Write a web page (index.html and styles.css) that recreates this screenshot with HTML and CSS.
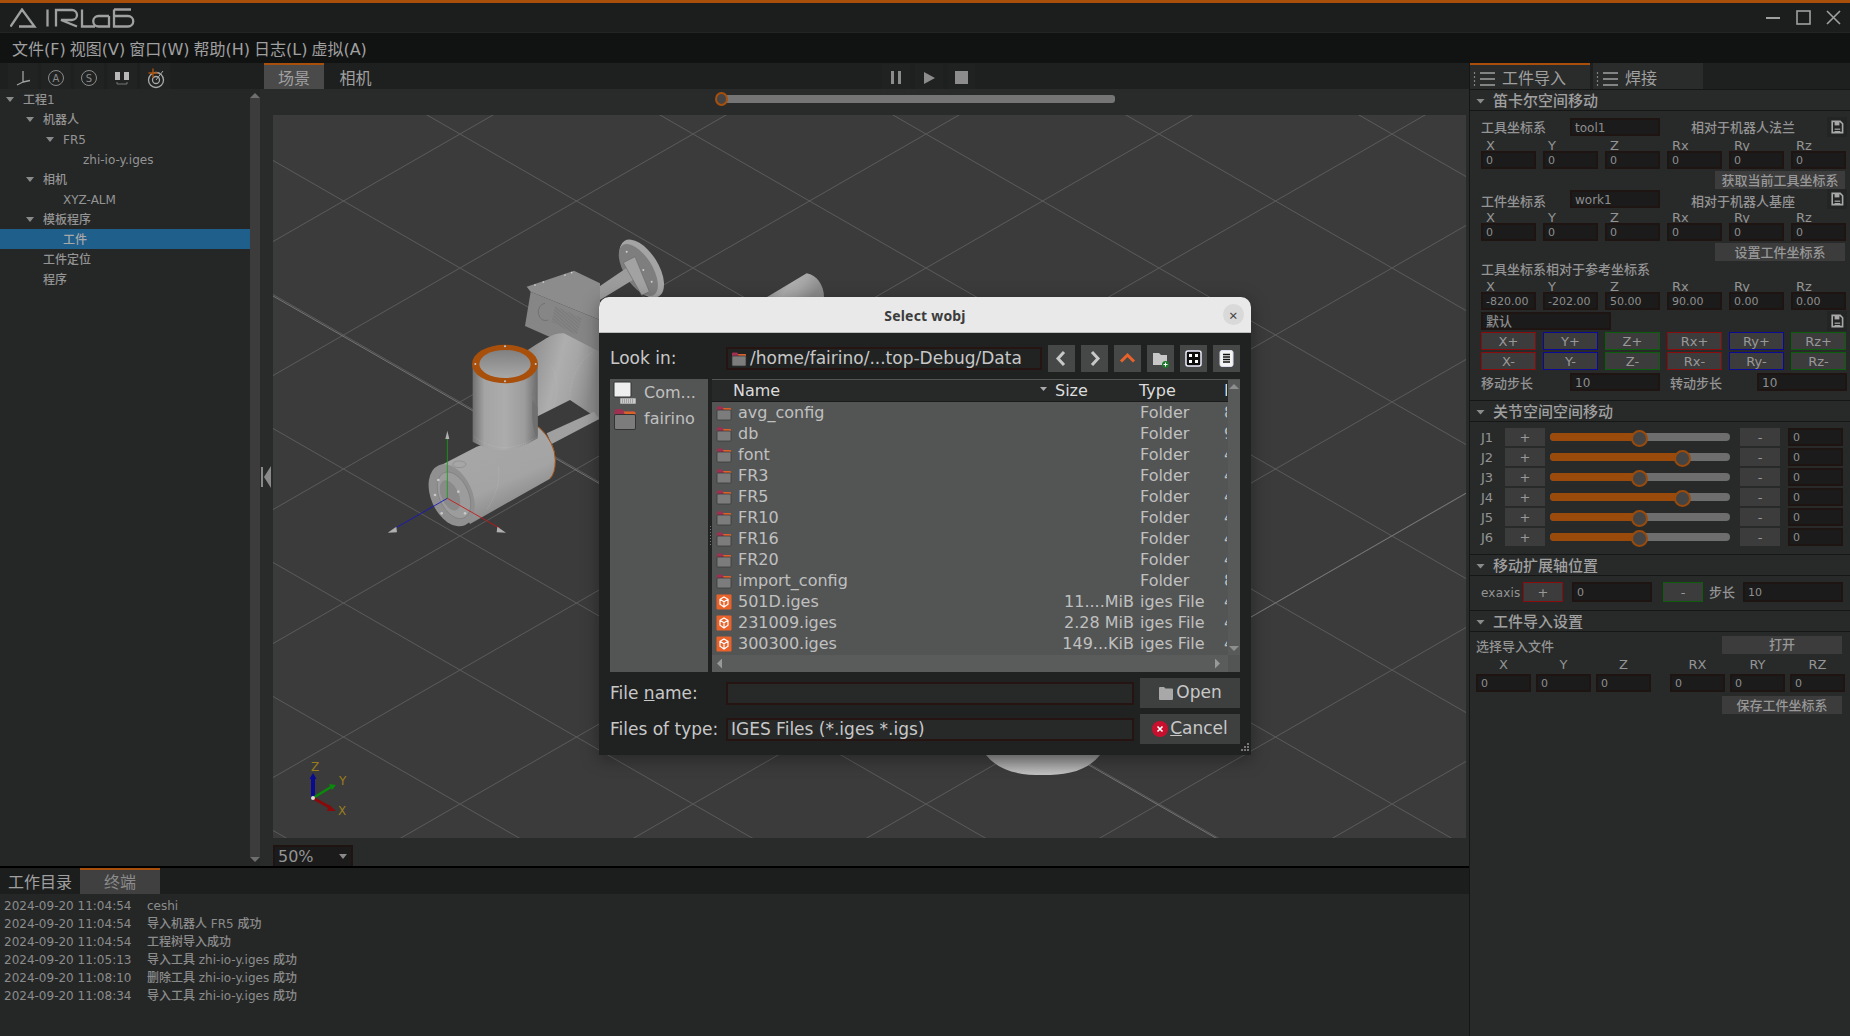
FILE: index.html
```html
<!DOCTYPE html>
<html lang="zh">
<head>
<meta charset="utf-8">
<title>AIRLab</title>
<link rel="stylesheet" href="styles.css">
</head>
<body>
<svg class="defs" width="0" height="0" aria-hidden="true">
  <defs>
    <symbol id="folder" viewBox="0 0 16 16">
      <path d="M1 2.500a1 1 0 0 1 1-1h4l1.500 1.500H14a1 1 0 0 1 1 1V7H1z" fill="#a03050"/>
      <path d="M7 3h7a1 1 0 0 1 1 1v1H8z" fill="#d9622b"/>
      <rect x="1" y="5" width="14" height="10" rx="1" fill="#7c7c7c" stroke="#333" stroke-width=".7"/>
    </symbol>
    <symbol id="iges" viewBox="0 0 16 16">
      <rect x="0.500" y="0.500" width="15" height="15" rx="1" fill="#e9622a"/>
      <path d="M8 3l4 2.300v4.900L8 13l-4-2.800V5.300zM4 5.300l4 2.400 4-2.400M8 7.700V13" fill="none" stroke="#fff" stroke-width="1.200"/>
    </symbol>
    <symbol id="save" viewBox="0 0 20 20">
      <path d="M4 3h10l3 3v11H4z" fill="none" stroke="#a8a8a8" stroke-width="2"/>
      <rect x="7" y="3" width="6" height="5" fill="#a8a8a8"/>
      <rect x="7" y="12" width="7" height="1.500" fill="#a8a8a8"/>
      <rect x="7" y="15" width="7" height="1.500" fill="#a8a8a8"/>
    </symbol>
    <symbol id="burger" viewBox="0 0 24 16">
      <path d="M7 2h15M7 8h15M7 14h15" stroke="#a0a0a0" stroke-width="1.500"/>
      <path d="M1.500 1v2M1.500 5v2M1.500 9v2M1.500 13v2" stroke="#808080" stroke-width="1.200"/>
    </symbol>
    <pattern id="gridcell" x="460" y="134" width="233" height="134" patternUnits="userSpaceOnUse">
      <path d="M0 0L233 134M0 134L233 0" stroke="#5a5a5a" stroke-width="1" fill="none"/>
    </pattern>
    <linearGradient id="gv" x1="0" x2="1" y1="0" y2="0">
      <stop offset="0" stop-color="#707070"/><stop offset=".18" stop-color="#a4a4a4"/><stop offset=".5" stop-color="#acacac"/><stop offset=".8" stop-color="#9c9c9c"/><stop offset="1" stop-color="#6c6c6c"/>
    </linearGradient>
    <linearGradient id="gh" x1=".2" x2=".75" y1="0" y2="1">
      <stop offset="0" stop-color="#a8a8a8"/><stop offset=".6" stop-color="#a4a4a4"/><stop offset="1" stop-color="#787878"/>
    </linearGradient>
    <linearGradient id="ge" x1="0" x2="1" y1="0" y2=".3">
      <stop offset="0" stop-color="#888"/><stop offset=".5" stop-color="#aeaeae"/><stop offset=".7" stop-color="#a6a6a6"/><stop offset="1" stop-color="#8c8c8c"/>
    </linearGradient>
    <linearGradient id="gb" x1="0" x2="0" y1="0" y2="1">
      <stop offset="0" stop-color="#8a8a8a"/><stop offset="1" stop-color="#c2c2c2"/>
    </linearGradient>
    <linearGradient id="gi" x1="0" x2="0" y1="0" y2="1">
      <stop offset="0" stop-color="#808080"/><stop offset="1" stop-color="#a8a8a8"/>
    </linearGradient>
    <pattern id="hatch" width="4" height="4" patternUnits="userSpaceOnUse" patternTransform="rotate(70)">
      <path d="M0 0V4" stroke="#686868" stroke-width="1.500"/>
    </pattern>
  </defs>
</svg>

<div class="app">
  <div class="accent"></div>

  <header class="titlebar">
    <svg class="logo" width="126" height="20" viewBox="0 0 126 20" role="img" aria-label="AIRLab">
      <path d="M.5 18.500L12 1.500 24.500 18.500H9M37.500 1.500V18.500M46 18.500V2H62a5 5 0 0 1 0 10H51L67 18.500M72 1.500V18.500H85M99 8H88.500a5.200 5.200 0 0 0 0 10.500H99V8M104 1.500V18.500H118a5.200 5.200 0 0 0 0-10.500H104M104 1.500H121" fill="none" stroke="#a0a0a0" stroke-width="2.300"/>
    </svg>
    <div class="winctl">
      <svg width="84" height="16" viewBox="0 0 84 16" aria-hidden="true">
        <path d="M0 8H14" stroke="#a0a0a0" stroke-width="2"/>
        <rect x="31" y="1" width="13" height="13" fill="none" stroke="#a0a0a0" stroke-width="1.600"/>
        <path d="M61 1L74 14M74 1L61 14" stroke="#a0a0a0" stroke-width="1.600"/>
      </svg>
    </div>
  </header>

  <nav class="menubar">
    <span>文件(F)</span><span>视图(V)</span><span>窗口(W)</span><span>帮助(H)</span><span>日志(L)</span><span>虚拟(A)</span>
  </nav>

  <div class="workspace">
    <div class="main">
      <div class="toolrow">
        <div class="tools">
          <svg class="tool" width="30" height="26" viewBox="0 -2 30 26"><path d="M15 6V17M15 17L9 20M15 17L22 15.500" stroke="#a0a0a0" stroke-width="1.300" fill="none"/></svg>
          <svg class="tool" width="30" height="26" viewBox="0 -2 30 26"><circle cx="15" cy="13" r="7.500" fill="none" stroke="#8a8a8a"/><text x="15" y="17" class="toolglyph">A</text></svg>
          <svg class="tool" width="30" height="26" viewBox="0 -2 30 26"><circle cx="15" cy="13" r="7.500" fill="none" stroke="#8a8a8a"/><text x="15" y="17" class="toolglyph">S</text></svg>
          <svg class="tool" width="30" height="26" viewBox="0 -2 30 26"><rect x="8" y="7" width="5" height="8" fill="#b8b8b8"/><rect x="17" y="7" width="5" height="8" fill="#b8b8b8"/><path d="M10 17v2h10v-2" stroke="#777" fill="none"/></svg>
          <svg class="tool" width="30" height="26" viewBox="0 -2 30 26"><circle cx="16" cy="15" r="7.500" fill="none" stroke="#a8a8a8" stroke-width="1.300"/><circle cx="16" cy="15" r="3.500" fill="none" stroke="#a8a8a8" stroke-width="1.300"/><path d="M16 15L23 6" stroke="#a8a8a8"/><path d="M13 3.500V12.500M8.500 8H17.500" stroke="#a84f0c" stroke-width="1.400"/></svg>
        </div>
        <div class="viewtabs">
          <span class="vtab on">场景</span><span class="vtab">相机</span>
        </div>
        <div class="playback">
          <svg width="94" height="26" viewBox="0 0 94 26" aria-hidden="true">
            <rect x="1" y="1" width="28" height="25" fill="#202222"/><rect x="34" y="1" width="28" height="25" fill="#202222"/><rect x="67" y="1" width="27" height="25" fill="#202222"/>
            <rect x="10" y="8" width="3" height="13" fill="#8c8c8c"/><rect x="17" y="8" width="3" height="13" fill="#8c8c8c"/>
            <path d="M43 9L54 15 43 21z" fill="#8c8c8c"/>
            <rect x="74" y="8" width="13" height="13" fill="#8c8c8c"/>
          </svg>
        </div>
      </div>

      <div class="center">
        <aside class="tree">
          <div class="row l0"><i class="tri"></i>工程1</div>
          <div class="row l1"><i class="tri"></i>机器人</div>
          <div class="row l2"><i class="tri"></i>FR5</div>
          <div class="row l3"><i class="notri"></i>zhi-io-y.iges</div>
          <div class="row l1"><i class="tri"></i>相机</div>
          <div class="row l2"><i class="notri"></i>XYZ-ALM</div>
          <div class="row l1"><i class="tri"></i>模板程序</div>
          <div class="row l2 sel"><i class="notri"></i>工件</div>
          <div class="row l1"><i class="notri"></i>工件定位</div>
          <div class="row l1"><i class="notri"></i>程序</div>
        </aside>
        <div class="vscroll"><i class="up"></i><b></b><i class="down"></i></div>
        <div class="stage">
          <div class="timeline"><div class="track"><span class="thumb"></span></div></div>
          <div class="viewrow">
            <div class="collapse"><svg width="13" height="22" viewBox="0 0 13 22" aria-hidden="true"><rect x="1" y="1" width="2" height="20" fill="#8a8a8a"/><path d="M11 0V22L4 11z" fill="#8a8a8a"/></svg></div>
            <svg class="scene" width="1193" height="723" viewBox="273 115 1193 723" aria-hidden="true">
              <rect x="273" y="115" width="1193" height="723" fill="#3b3b3b"/>
              <rect x="273" y="115" width="1193" height="723" fill="url(#gridcell)"/>
              <path d="M273 296L1468 983M1251 617L1468 492" stroke="#747474" fill="none"/>
              <path d="M986 755C1000 772 1020 775 1043 775 1066 775 1086 772 1100 755z" fill="url(#gb)"/>
              <g transform="translate(370 220) scale(.33333)">
                <path d="M1190 232L1310 160C1340 165 1362 195 1362 232z" fill="url(#ge)"/>
                <ellipse cx="815" cy="146" rx="50" ry="98" transform="rotate(-32 815 146)" fill="#a4a4a4"/>
                <ellipse cx="805" cy="150" rx="42" ry="88" transform="rotate(-32 805 150)" fill="#7e7e7e"/>
                <path d="M660 228L680 205 775 140 792 178 690 240z" fill="#9c9c9c"/>
                <path d="M760 128L795 110 838 215 815 226z" fill="#a2a2a2" stroke="#6c6c6c" stroke-width="2"/>
                <g fill="#cfcfcf"><circle cx="770" cy="95" r="3"/><circle cx="820" cy="150" r="3"/><circle cx="845" cy="185" r="3"/></g>
                <path d="M470 200L612 152 690 190V300L482 215z" fill="#8c8c8c"/>
                <path d="M482 215L690 300V400L640 395 465 318z" fill="#868686"/>
                <g fill="#d8d8d8"><circle cx="495" cy="195" r="2.500"/><circle cx="520" cy="186" r="2.500"/><circle cx="585" cy="165" r="2.500"/><circle cx="605" cy="158" r="2.500"/></g>
                <path d="M555 258L635 295 620 345 545 305z" fill="url(#hatch)"/>
                <path d="M525 250A22 26 0 1 0 535 300" fill="none" stroke="#666" stroke-width="2"/>
                <path d="M470 392C520 362 545 338 582 340L690 396V600L600 540 500 590z" fill="url(#ge)"/>
                <path d="M545 440Q575 490 550 560M600 540Q600 440 670 395" stroke="#d0d0d0" stroke-dasharray="2 4" fill="none"/>
                <path d="M530 640L672 575 688 597 545 672z" fill="#a0a0a0"/>
                <path d="M195 745L320 680 500 618Q556 660 556 722 556 760 540 776L300 912z" fill="url(#gh)"/>
                <path d="M506 620Q556 668 556 722 556 760 540 776" fill="none" stroke="#a84f0c" stroke-width="3"/>
                <path d="M308 432V665Q400 720 503 655V432z" fill="url(#gv)"/>
                <path d="M492 500C480 540 498 560 503 560V650C490 640 480 590 492 500z" fill="#707070"/>
                <path d="M312 650Q400 715 503 650M385 740Q395 800 350 870" stroke="#dcdcdc" stroke-dasharray="2 4" fill="none"/>
                <ellipse cx="405" cy="432" rx="99" ry="58" fill="#a84f0c"/>
                <ellipse cx="405" cy="432" rx="77" ry="42" fill="url(#gi)"/>
                <g fill="#cccccc"><circle cx="405" cy="379" r="3"/><circle cx="405" cy="484" r="3"/><circle cx="316" cy="432" r="3"/><circle cx="497" cy="432" r="3"/></g>
                <ellipse cx="268" cy="733" rx="20" ry="10" fill="none" stroke="#888" stroke-width="2"/>
                <ellipse cx="245" cy="826" rx="62" ry="98" transform="rotate(-24 245 826)" fill="#909090"/>
                <ellipse cx="252" cy="826" rx="44" ry="74" transform="rotate(-24 252 826)" fill="#9c9c9c" stroke="#7c7c7c" stroke-width="2"/>
                <ellipse cx="240" cy="826" rx="26" ry="48" transform="rotate(-24 240 826)" fill="#8a8a8a"/>
                <g fill="#c8c8c8"><circle cx="205" cy="780" r="4"/><circle cx="265" cy="815" r="4"/><circle cx="215" cy="880" r="4"/><circle cx="285" cy="880" r="4"/><circle cx="195" cy="825" r="4"/></g>
                <path d="M232 835V650" stroke="#12a012" stroke-width="2.500"/>
                <path d="M232 835L75 925" stroke="#1414c8" stroke-width="2.500"/>
                <path d="M232 835L390 925" stroke="#c81414" stroke-width="2.500"/>
                <g fill="#b0b0b0"><path d="M232 632l6 25h-12z"/><path d="M53 938l26-18 2 17z"/><path d="M408 938l-26-18-2 17z"/></g>
              </g>
              <path d="M313 798V776" stroke="#0a0a90" stroke-width="4"/>
              <path d="M313 773l-3.500 6h7z" fill="#0a0a90"/>
              <path d="M313 798L331 787" stroke="#0a8a0a" stroke-width="2.500"/>
              <path d="M336 785l-7-1 3 6z" fill="#0a8a0a"/>
              <path d="M313 798L331 808" stroke="#8a0a0a" stroke-width="3"/>
              <path d="M336 811l-7-6-2 6z" fill="#8a0a0a"/>
              <circle cx="313" cy="798" r="2" fill="#ddd"/>
              <text class="axis" x="311" y="771">Z</text>
              <text class="axis" x="339" y="785">Y</text>
              <text class="axis" x="338" y="815">X</text>
            </svg>
          </div>
          <div class="zoombar"><div class="zoomcombo"><span>50%</span><i class="tri"></i></div></div>
        </div>
      </div>

      <div class="hline"></div>

      <div class="bottom">
        <div class="logtabs"><span class="ltab">工作目录</span><span class="ltab on">终端</span></div>
        <div class="log">
          <div class="logrow"><time>2024-09-20 11:04:54</time><span>ceshi</span></div>
          <div class="logrow"><time>2024-09-20 11:04:54</time><span>导入机器人 FR5 成功</span></div>
          <div class="logrow"><time>2024-09-20 11:04:54</time><span>工程树导入成功</span></div>
          <div class="logrow"><time>2024-09-20 11:05:13</time><span>导入工具 zhi-io-y.iges 成功</span></div>
          <div class="logrow"><time>2024-09-20 11:08:10</time><span>删除工具 zhi-io-y.iges 成功</span></div>
          <div class="logrow"><time>2024-09-20 11:08:34</time><span>导入工具 zhi-io-y.iges 成功</span></div>
        </div>
      </div>
    </div>

    <aside class="right">
      <div class="rtabs">
        <span class="rtab on"><svg width="24" height="16"><use href="#burger"/></svg>工件导入</span>
        <span class="rtab"><svg width="24" height="16"><use href="#burger"/></svg>焊接</span>
      </div>

      <section class="sec">
        <h3 class="sechead"><i class="tri"></i>笛卡尔空间移动</h3>
        <div class="body b1">
          <div class="frame"><span class="flabel">工具坐标系</span><span class="inp fname">tool1</span><span class="rel">相对于机器人法兰</span><span class="savebox"><svg width="16" height="16"><use href="#save"/></svg></span></div>
          <div class="six labels"><span>X</span><span>Y</span><span>Z</span><span>Rx</span><span>Ry</span><span>Rz</span></div>
          <div class="six vals"><span class="inp">0</span><span class="inp">0</span><span class="inp">0</span><span class="inp">0</span><span class="inp">0</span><span class="inp">0</span></div>
          <div class="btn wide mt2">获取当前工具坐标系</div>
          <div class="frame frame2"><span class="flabel">工件坐标系</span><span class="inp fname">work1</span><span class="rel">相对于机器人基座</span><span class="savebox"><svg width="16" height="16"><use href="#save"/></svg></span></div>
          <div class="six labels"><span>X</span><span>Y</span><span>Z</span><span>Rx</span><span>Ry</span><span>Rz</span></div>
          <div class="six vals"><span class="inp">0</span><span class="inp">0</span><span class="inp">0</span><span class="inp">0</span><span class="inp">0</span><span class="inp">0</span></div>
          <div class="btn wide mt2">设置工件坐标系</div>
          <div class="reftitle">工具坐标系相对于参考坐标系</div>
          <div class="six labels short"><span>X</span><span>Y</span><span>Z</span><span>Rx</span><span>Ry</span><span>Rz</span></div>
          <div class="six vals"><span class="inp">-820.00</span><span class="inp">-202.00</span><span class="inp">50.00</span><span class="inp">90.00</span><span class="inp">0.00</span><span class="inp">0.00</span></div>
          <div class="preset mt2"><span class="inp presetinp">默认</span><span class="savebox"><svg width="16" height="16"><use href="#save"/></svg></span></div>
          <div class="six mt2"><span class="btn red">X+</span><span class="btn blue">Y+</span><span class="btn green">Z+</span><span class="btn red">Rx+</span><span class="btn blue">Ry+</span><span class="btn green">Rz+</span></div>
          <div class="six mt2"><span class="btn red">X-</span><span class="btn blue">Y-</span><span class="btn green">Z-</span><span class="btn red">Rx-</span><span class="btn blue">Ry-</span><span class="btn green">Rz-</span></div>
          <div class="steps mt2"><span class="flabel">移动步长</span><span class="inp fname">10</span><span class="flabel gapl">转动步长</span><span class="inp fname">10</span></div>
        </div>
      </section>

      <section class="sec">
        <h3 class="sechead"><i class="tri"></i>关节空间空间移动</h3>
        <div class="body b2">
          <div class="jrow"><span>J1</span><span class="btn">+</span><div class="slider"><b style="width:51%"></b></div><span class="btn">-</span><span class="inp">0</span></div>
          <div class="jrow"><span>J2</span><span class="btn">+</span><div class="slider"><b style="width:75%"></b></div><span class="btn">-</span><span class="inp">0</span></div>
          <div class="jrow"><span>J3</span><span class="btn">+</span><div class="slider"><b style="width:51%"></b></div><span class="btn">-</span><span class="inp">0</span></div>
          <div class="jrow"><span>J4</span><span class="btn">+</span><div class="slider"><b style="width:75%"></b></div><span class="btn">-</span><span class="inp">0</span></div>
          <div class="jrow"><span>J5</span><span class="btn">+</span><div class="slider"><b style="width:51%"></b></div><span class="btn">-</span><span class="inp">0</span></div>
          <div class="jrow"><span>J6</span><span class="btn">+</span><div class="slider"><b style="width:51%"></b></div><span class="btn">-</span><span class="inp">0</span></div>
        </div>
      </section>

      <section class="sec">
        <h3 class="sechead"><i class="tri"></i>移动扩展轴位置</h3>
        <div class="body b3">
          <span class="exlabel">exaxis</span><span class="btn red">+</span><span class="inp">0</span><span class="btn green">-</span><span class="exstep">步长</span><span class="inp">10</span>
        </div>
      </section>

      <section class="sec">
        <h3 class="sechead"><i class="tri"></i>工件导入设置</h3>
        <div class="body b4">
          <div class="pickrow"><span>选择导入文件</span><span class="btn w120">打开</span></div>
          <div class="six4 labels4"><span>X</span><span>Y</span><span>Z</span><span class="c4">RX</span><span>RY</span><span>RZ</span></div>
          <div class="six4"><span class="inp">0</span><span class="inp">0</span><span class="inp">0</span><span class="inp c4">0</span><span class="inp">0</span><span class="inp">0</span></div>
          <div class="btn w120 saveb">保存工件坐标系</div>
        </div>
      </section>
    </aside>
  </div>

  <div class="dialog" role="dialog" aria-label="Select wobj">
    <div class="dtitle"><span>Select wobj</span><span class="dclose">×</span></div>
    <div class="dbody">
      <div class="lookrow">
        <span class="dlabel">Look in:</span>
        <span class="dinput combo"><svg width="16" height="16"><use href="#folder"/></svg>/home/fairino/...top-Debug/Data</span>
        <span class="nav"><svg width="27" height="27" viewBox="0 0 27 27"><path d="M16 7L10 13.500 16 20" fill="none" stroke="#c8c8c8" stroke-width="3"/></svg></span>
        <span class="nav"><svg width="27" height="27" viewBox="0 0 27 27"><path d="M11 7L17 13.500 11 20" fill="none" stroke="#c8c8c8" stroke-width="3"/></svg></span>
        <span class="nav"><svg width="27" height="27" viewBox="0 0 27 27"><path d="M7 16.500L13.500 10 20 16.500" fill="none" stroke="#e9622a" stroke-width="3"/></svg></span>
        <span class="nav"><svg width="27" height="27" viewBox="0 0 27 27"><path d="M6 8h6l2 2h6v10H6z" fill="#c8c8c8"/><circle cx="18.500" cy="19.500" r="3.500" fill="#1d7a2a"/><path d="M18.500 17.500v4M16.500 19.500h4" stroke="#fff"/></svg></span>
        <span class="nav"><svg width="27" height="27" viewBox="0 0 27 27"><rect x="6" y="6" width="15" height="15" rx="2" fill="#0c0c0c" stroke="#eef" stroke-width="1.500"/><path d="M9 9h3v3H9zM15 9h3v3h-3zM9 15h3v3H9zM15 15h3v3h-3z" fill="#fff"/></svg></span>
        <span class="nav"><svg width="27" height="27" viewBox="0 0 27 27"><rect x="7" y="5.500" width="13" height="16" rx="2" fill="#f4f4f4" stroke="#dde" /><path d="M10 9.500h7M10 12h7M10 14.500h7M10 17h7" stroke="#111" stroke-width="1.300"/></svg></span>
      </div>

      <div class="browser">
        <div class="places">
          <div class="place"><svg class="pic" width="24" height="24" viewBox="0 0 24 24"><rect x="1" y="1" width="17" height="15" rx="1" fill="#eee" stroke="#333"/><rect x="7" y="17" width="16" height="6" fill="#ccc" stroke="#555" stroke-width=".6"/><path d="M9 19h12M9 21h12" stroke="#777" stroke-dasharray="1 1"/></svg><span>Com...</span></div>
          <div class="place"><svg class="pic" width="24" height="24"><use href="#folder"/></svg><span>fairino</span></div>
        </div>
        <div class="splitter"></div>
        <div class="files">
          <div class="fhead"><span class="hname">Name</span><i class="tri small"></i><span class="hsize">Size</span><span class="htype">Type</span><span class="hdate">D</span></div>
          <div class="frows">
            <div class="frow"><svg width="16" height="16"><use href="#folder"/></svg><span class="n">avg_config</span><span class="s"></span><span class="t">Folder</span><span class="d">8</span></div>
            <div class="frow"><svg width="16" height="16"><use href="#folder"/></svg><span class="n">db</span><span class="s"></span><span class="t">Folder</span><span class="d">9</span></div>
            <div class="frow"><svg width="16" height="16"><use href="#folder"/></svg><span class="n">font</span><span class="s"></span><span class="t">Folder</span><span class="d">4</span></div>
            <div class="frow"><svg width="16" height="16"><use href="#folder"/></svg><span class="n">FR3</span><span class="s"></span><span class="t">Folder</span><span class="d">4</span></div>
            <div class="frow"><svg width="16" height="16"><use href="#folder"/></svg><span class="n">FR5</span><span class="s"></span><span class="t">Folder</span><span class="d">4</span></div>
            <div class="frow"><svg width="16" height="16"><use href="#folder"/></svg><span class="n">FR10</span><span class="s"></span><span class="t">Folder</span><span class="d">4</span></div>
            <div class="frow"><svg width="16" height="16"><use href="#folder"/></svg><span class="n">FR16</span><span class="s"></span><span class="t">Folder</span><span class="d">4</span></div>
            <div class="frow"><svg width="16" height="16"><use href="#folder"/></svg><span class="n">FR20</span><span class="s"></span><span class="t">Folder</span><span class="d">4</span></div>
            <div class="frow"><svg width="16" height="16"><use href="#folder"/></svg><span class="n">import_config</span><span class="s"></span><span class="t">Folder</span><span class="d">8</span></div>
            <div class="frow"><svg width="16" height="16"><use href="#iges"/></svg><span class="n">501D.iges</span><span class="s">11....MiB</span><span class="t">iges File</span><span class="d">4</span></div>
            <div class="frow"><svg width="16" height="16"><use href="#iges"/></svg><span class="n">231009.iges</span><span class="s">2.28 MiB</span><span class="t">iges File</span><span class="d">4</span></div>
            <div class="frow"><svg width="16" height="16"><use href="#iges"/></svg><span class="n">300300.iges</span><span class="s">149...KiB</span><span class="t">iges File</span><span class="d">4</span></div>
          </div>
          <div class="dvs"><i class="up"></i><b></b><i class="down"></i></div>
          <div class="dhs"><i class="lt"></i><b></b><i class="rt"></i></div>
        </div>
      </div>

      <div class="formrow">
        <span class="dlabel">File <u>n</u>ame:</span>
        <span class="dinput"></span>
        <span class="dbtn"><svg width="16" height="16" viewBox="0 0 16 16"><path d="M1 3a1 1 0 0 1 1-1h4l1.500 1.500H14a1 1 0 0 1 1 1V14a1 1 0 0 1-1 1H2a1 1 0 0 1-1-1z" fill="#a8a8a8"/></svg>Open</span>
      </div>
      <div class="formrow">
        <span class="dlabel">Files of type:</span>
        <span class="dinput">IGES Files (*.iges *.igs)</span>
        <span class="dbtn"><svg width="16" height="16" viewBox="0 0 16 16"><circle cx="8" cy="8" r="8" fill="#c8102e"/><path d="M5.500 5.500l5 5M10.500 5.500l-5 5" stroke="#fff" stroke-width="1.600"/></svg><span><u>C</u>ancel</span></span>
      </div>
      <svg class="grip" width="10" height="10" viewBox="0 0 10 10" aria-hidden="true"><path d="M7 0h2v2H7zM4 3h2v2H4zM7 3h2v2H7zM1 6h2v2H1zM4 6h2v2H4zM7 6h2v2H7z" fill="#777"/></svg>
    </div>
  </div>
</div>
</body>
</html>
```

FILE: styles.css
```css
* { box-sizing: border-box; }
html, body { margin: 0; padding: 0; background: #252727; }
body {
  font-family: "DejaVu Sans", "Noto Sans CJK SC", sans-serif;
  color: #949494;
  font-size: 12px;
  line-height: 1.25;
  overflow: hidden;
}
.defs { position: absolute; }
i { display: block; }
svg { display: block; flex: none; }
.app { position: relative; width: 1850px; height: 1036px; display: flex; flex-direction: column; overflow: hidden; }
.accent { height: 3px; background: #a84f0c; flex: none; }

.titlebar { height: 30px; flex: none; background: #1c1e1e; display: flex; align-items: center; justify-content: space-between; padding: 0 0 0 10px; border-bottom: 1px solid #252525; }
.winctl { display: flex; }

.menubar { height: 30px; flex: none; background: #111313; display: flex; align-items: center; padding: 3px 0 0 12px; gap: 4px; font-size: 16px; color: #a0a0a0; }

.workspace { display: flex; height: 973px; flex: none; }
.main { width: 1469px; flex: none; display: flex; flex-direction: column; }

.toolrow { height: 26px; flex: none; display: flex; background: #1e2020; }
.tools { width: 264px; flex: none; display: flex; padding-left: 8px; gap: 3px; }
.tool { background: #212323; }
.toolglyph { font-size: 10px; fill: #8a8a8a; text-anchor: middle; }
.viewtabs { display: flex; width: 617px; flex: none; }
.vtab { width: 63px; display: flex; align-items: center; justify-content: center; padding-top: 4px; font-size: 16px; color: #a0a0a0; border-top: 2px solid transparent; }
.vtab.on { width: 60px; background: #4a4a4a; border-top-color: #a84f0c; }
.playback { flex: none; }

.center { height: 777px; flex: none; display: flex; background: #292b2b; }
.tree { width: 250px; flex: none; background: #252727; font-size: 12px; color: #949494; font-weight: 500; }
.row { height: 20px; display: flex; align-items: center; padding-top: 3px; }
.l0 { padding-left: 6px; }
.l1 { padding-left: 26px; }
.l2 { padding-left: 46px; }
.l3 { padding-left: 66px; }
.row .notri { width: 17px; flex: none; }
.tri { width: 8px; height: 5px; background: #8a8a8a; clip-path: polygon(0 0, 100% 0, 50% 100%); }
.row .tri { flex: none; margin: 0 9px 2px 0; }
.sel { background: #1f5f8b; color: #a8a8a8; }

.vscroll { width: 10px; flex: none; padding: 4px 0; background: #252727; display: flex; flex-direction: column; align-items: center; }
.vscroll b { flex: 1; width: 10px; background: #3c3c3c; }
.up { width: 10px; height: 5px; background: #6e6e6e; clip-path: polygon(50% 0, 100% 100%, 0 100%); }
.down { width: 10px; height: 5px; background: #6e6e6e; clip-path: polygon(0 0, 100% 0, 50% 100%); }

.stage { flex: 1; display: flex; flex-direction: column; min-width: 0; }
.timeline { height: 26px; flex: none; padding: 6px 0 0 456px; }
.track { position: relative; width: 399px; height: 8px; background: #757575; border-radius: 3px; }
.thumb { position: absolute; left: -1px; top: -3px; width: 13px; height: 14px; border-radius: 50%; background: #444; border: 2px solid #a84f0c; }
.viewrow { height: 723px; flex: none; display: flex; }
.collapse { width: 13px; flex: none; display: flex; align-items: center; }
.scene { flex: none; }
.axis { font-size: 12px; fill: #9a7d1e; font-family: "DejaVu Sans", sans-serif; }
.zoombar { flex: 1; padding: 7px 0 0 13px; }
.zoomcombo { width: 80px; height: 21px; background: #1b1b1b; border: 2px solid #201412; border-bottom: 0; display: flex; align-items: center; justify-content: space-between; padding: 0 4px 0 3px; font-size: 16px; color: #949494; }

.hline { height: 2px; flex: none; background: #000; }

.bottom { flex: 1; display: flex; flex-direction: column; min-height: 0; }
.logtabs { height: 26px; flex: none; background: #1c1e1e; display: flex; }
.ltab { width: 80px; display: flex; align-items: center; justify-content: center; padding-top: 1px; font-size: 16px; color: #a0a0a0; border-top: 2px solid transparent; }
.ltab.on { background: #404040; border-top-color: #a84f0c; color: #8c8c8c; }
.log { flex: 1; background: #252727; padding: 3px 0 0 4px; }
.logrow { height: 18px; display: flex; align-items: center; font-size: 12px; color: #8c8c8c; }
.logrow time { width: 143px; flex: none; }
.logrow span { font-weight: 500; }

.right { width: 381px; flex: none; background: #282a2a; border-left: 1px solid #151515; }
.rtabs { height: 26px; background: #1e2020; display: flex; gap: 3px; }
.rtab { width: 120px; display: flex; align-items: center; gap: 5px; padding: 4px 0 0 3px; font-size: 16px; color: #a0a0a0; background: #2a2c2c; border-top: 2px solid transparent; }
.rtab.on { border-top-color: #a84f0c; }
.rtab + .rtab { width: 110px; }
.sec { display: block; }
.sechead { margin: 0; height: 22px; border-top: 1px solid #151616; border-bottom: 1px solid #151616; display: flex; align-items: center; padding: 2px 0 0 6px; font-size: 15px; font-weight: 500; color: #a0a0a0; }
.sechead .tri { margin-right: 8px; width: 9px; flex: none; }
.body { padding-left: 11px; }
.b1 { padding-top: 6px; padding-bottom: 8px; }
.b2 { padding-top: 6px; padding-bottom: 8px; display: flex; flex-direction: column; gap: 2px; }
.b3 { padding-top: 6px; padding-bottom: 8px; display: flex; height: 34px; }
.b4 { padding: 4px 0 0 6px; }

.inp { display: flex; align-items: center; height: 18px; background: #1b1b1b; border: 2px solid #1e1412; color: #8e8e8e; padding: 2px 0 0 3px; font-size: 11px; min-width: 0; }
.btn { display: flex; align-items: center; justify-content: center; height: 18px; padding-top: 2px; background: #3c3c3c; color: #989898; font-size: 13px; font-weight: 500; }
.mt2 { margin-top: 2px; }
.frame { display: flex; height: 20px; align-items: center; }
.flabel { width: 89px; flex: none; padding-top: 2px; font-size: 13px; font-weight: 500; color: #949494; }
.fname { width: 90px; flex: none; font-size: 12px; }
.rel { width: 136px; margin-left: 31px; flex: none; padding-top: 2px; font-size: 13px; font-weight: 500; color: #949494; white-space: nowrap; }
.frame2 .flabel, .frame2 .rel { padding-top: 6px; }
.savebox { width: 20px; height: 20px; background: #232525; display: flex; align-items: center; justify-content: center; margin-left: auto; margin-right: 3px; }
.six { display: grid; grid-template-columns: repeat(6, 55px); gap: 0 7px; height: 18px; }
.vals { position: relative; }
.labels { height: 14px; line-height: 18px; font-size: 13px; color: #949494; }
.labels span { padding-left: 5px; }
.labels.short { height: 12px; line-height: 14px; }
.wide { width: 130px; margin-left: 234px; }
.reftitle { height: 19px; display: flex; align-items: center; font-size: 13px; font-weight: 500; color: #949494; }
.preset { display: flex; height: 18px; align-items: center; }
.presetinp { width: 130px; font-size: 13px; font-weight: 500; }
.red { border: 1px solid #8a0c0c; }
.blue { border: 1px solid #0a0a96; }
.green { border: 1px solid #0c5e0c; }
.steps { display: flex; height: 20px; align-items: center; }
.steps .flabel { padding-top: 4px; }
.gapl { margin-left: 10px; width: 87px; }

.jrow { display: grid; grid-template-columns: 24px 40px 195px 40px 63px; height: 18px; align-items: center; font-size: 13px; }
.jrow > span:first-child { padding-top: 2px; }
.jrow .btn { font-weight: 400; }
.jrow > .inp { margin-left: 8px; width: 55px; }
.slider { margin-left: 5px; width: 180px; height: 8px; background: #6e6e6e; border-radius: 4px; }
.slider b { display: block; height: 8px; background: #9a4b0c; border-radius: 4px; position: relative; }
.slider b::after { content: ""; position: absolute; right: -6px; top: -3px; width: 13px; height: 13px; border-radius: 50%; background: #444; border: 2px solid #9a4b0c; }

.exlabel { width: 42px; flex: none; display: flex; align-items: center; padding-top: 2px; font-size: 12px; letter-spacing: .2px; }
.b3 .btn { width: 40px; height: 20px; flex: none; font-weight: 400; }
.b3 .inp { height: 20px; width: 80px; margin: 0 11px 0 9px; flex: none; }
.exstep { width: 40px; flex: none; display: flex; align-items: center; padding: 2px 0 0 6px; font-size: 13px; font-weight: 500; white-space: nowrap; }
.b3 .inp:last-child { width: 100px; margin: 0; }

.pickrow { display: flex; justify-content: space-between; width: 366px; height: 18px; align-items: flex-end; font-size: 13px; font-weight: 500; }
.pickrow span:first-child { position: relative; top: 1px; }
.pickrow .btn { padding-top: 0; }
.w120 { width: 120px; height: 18px; }
.six4 { display: grid; grid-template-columns: 55px 55px 55px 9px 55px 55px 55px; gap: 0 5px; height: 18px; margin-top: 2px; }
.labels4 { height: 15px; margin-top: 3px; font-size: 13px; text-align: center; line-height: 15px; }
.c4 { grid-column: 5; }
.saveb { margin: 4px 0 0 246px; }

/* dialog */
.dialog { position: absolute; left: 599px; top: 297px; width: 652px; height: 458px; background: #202222; border-radius: 10px 10px 0 0; box-shadow: 0 4px 18px rgba(0,0,0,.35); overflow: hidden; color: #c4c4c4; }
.dtitle { height: 36px; padding-top: 2px; background: #e9e9e9; border-bottom: 1px solid #bdbdbd; display: flex; align-items: center; justify-content: center; position: relative; font: bold 14px "Noto Sans", sans-serif; color: #3c3c3c; letter-spacing: .2px; }
.dclose { position: absolute; right: 7px; top: 7px; width: 21px; height: 21px; border-radius: 50%; background: #d9d9d9; display: flex; align-items: center; justify-content: center; font-weight: 400; font-size: 15px; color: #444; }
.dbody { position: relative; height: 422px; padding: 12px 11px 0 11px; font-size: 17px; }
.lookrow { display: flex; gap: 6px; height: 27px; align-items: center; }
.lookrow .dlabel { width: 110px; }
.dlabel { flex: none; color: #c8c8c8; white-space: nowrap; }
.dinput { display: flex; align-items: center; height: 23px; background: #272929; border: 2px solid #251412; padding-left: 3px; color: #c8c8c8; white-space: nowrap; }
.combo { width: 316px; gap: 3px; background: #212323; }
.nav { width: 27px; height: 27px; background: #464848; flex: none; }

.browser { display: flex; margin-top: 7px; height: 293px; font-size: 16px; }
.places { width: 98px; flex: none; background: #535555; padding-top: 1px; }
.place { display: flex; align-items: center; gap: 7px; height: 26px; padding-left: 3px; color: #c0c0c0; }
.splitter { width: 4px; flex: none; background: radial-gradient(circle, #777 .6px, transparent 1px) 1px 146px / 3px 3px repeat-y; background-clip: content-box; padding: 146px 0 127px; }
.files { position: relative; flex: 1; background: #535555; padding-top: 1px; }
.fhead { position: relative; height: 22px; background: #272929; border-bottom: 1px solid #1a1a1a; color: #dcdcdc; display: flex; align-items: center; }
.hname { position: absolute; left: 21px; }
.small { position: absolute; left: 328px; top: 7px; width: 7px; height: 4px; background: #aaa; }
.hsize { position: absolute; left: 343px; }
.htype { position: absolute; left: 427px; }
.hdate { position: absolute; left: 512px; width: 3px; overflow: hidden; }
.frows { display: flex; flex-direction: column; }
.frow { display: grid; grid-template-columns: 22px 285px 111px 8px 82px 3px; height: 21px; align-items: center; padding-left: 4px; color: #c0c0c0; white-space: nowrap; }
.frow .n { grid-column: 2; }
.frow .s { grid-column: 3; text-align: right; }
.frow .t { grid-column: 5; margin-left: -2px; }
.frow .d { grid-column: 6; width: 3px; overflow: hidden; }
.frow svg { grid-column: 1; }
.dvs { position: absolute; right: 0; top: 1px; bottom: 17px; width: 12px; background: #585a5a; display: flex; flex-direction: column; padding: 4px 1px; }
.dvs b { flex: 1; }
.dvs .up, .dvs .down { background: #8e8e8e; }
.dhs { position: absolute; left: 0; right: 12px; bottom: 0; height: 17px; background: #5a5c5c; display: flex; align-items: center; justify-content: space-between; padding: 0 8px 0 5px; }
.lt { width: 5px; height: 10px; background: #999; clip-path: polygon(100% 0, 100% 100%, 0 50%); }
.rt { width: 5px; height: 10px; background: #999; clip-path: polygon(0 0, 100% 50%, 0 100%); }

.formrow { display: flex; align-items: center; height: 30px; margin-top: 6px; }
.formrow .dlabel { width: 116px; padding-top: 2px; }
.formrow .dinput { width: 408px; padding-top: 2px; }
.dbtn { width: 100px; height: 30px; margin-left: 6px; background: #3e4040; display: flex; align-items: center; justify-content: center; gap: 2px; color: #c8c8c8; flex: none; }
.grip { position: absolute; right: 1px; bottom: 2px; }
```
